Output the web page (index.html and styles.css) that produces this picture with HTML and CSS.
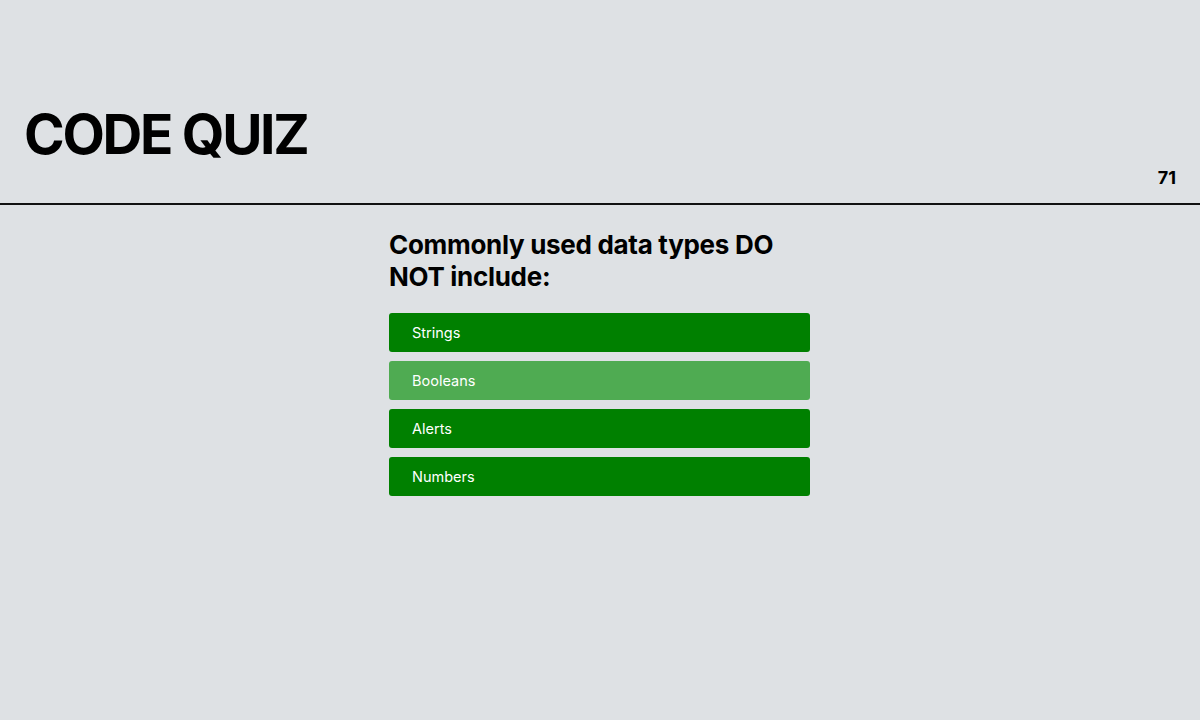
FILE: index.html
```html
<!DOCTYPE html>
<html lang="en">
<head>
<meta charset="utf-8">
<title>Code Quiz</title>
<link rel="stylesheet" href="styles.css">
</head>
<body>
<header class="top">
  <h1 class="brand">CODE QUIZ</h1>
  <div class="timer">71</div>
</header>
<main class="quiz">
  <h2 class="question">Commonly used data types DO NOT include:</h2>
  <div class="choices">
    <button class="choice">Strings</button>
    <button class="choice choice-hover">Booleans</button>
    <button class="choice">Alerts</button>
    <button class="choice">Numbers</button>
  </div>
</main>
</body>
</html>
```
FILE: styles.css
```css
* { box-sizing: border-box; }
html, body { margin: 0; padding: 0; }
body {
  background: #dee1e4;
  font-family: Inter, "Noto Sans", sans-serif;
  color: #000;
  width: 1200px;
  height: 720px;
}
.top {
  height: 205px;
  border-bottom: 2px solid #111;
  display: flex;
  justify-content: space-between;
  align-items: flex-end;
  padding: 0 24px 16px 24px;
}
.brand {
  margin: 0 0 25px 0;
  font-size: 55px;
  font-weight: 700;
  letter-spacing: -2.3px;
  line-height: 1;
}
.timer {
  font-size: 18px;
  font-weight: 700;
  line-height: 1;
}
.quiz {
  width: 422px;
  margin: 0 auto;
  padding-top: 24px;
}
.question {
  margin: 0 0 20px 0;
  font-size: 26px;
  font-weight: 700;
  line-height: 32px;
  letter-spacing: -0.3px;
}
.choices {
  display: flex;
  flex-direction: column;
  gap: 9px;
}
.choice {
  display: block;
  width: 421px;
  height: 39px;
  background: #008000;
  color: #fff;
  border: none;
  border-radius: 3px;
  text-align: left;
  padding: 0 0 0 23px;
  font-family: Inter, "Noto Sans", sans-serif;
  font-size: 14.5px;
  cursor: pointer;
}
.choice-hover { background: #4fab52; }
```
